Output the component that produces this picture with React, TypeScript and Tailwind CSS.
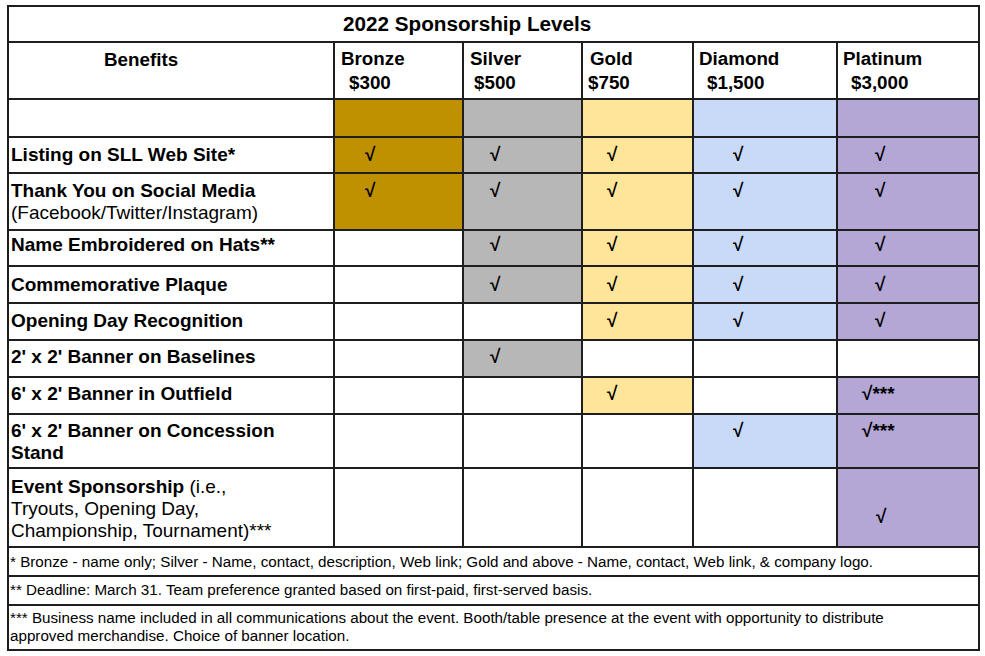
import React from "react";

type Level = "bronze" | "silver" | "gold" | "diamond" | "platinum";

const bg: Record<Level, string> = {
  bronze: "bg-[#bf9000]",
  silver: "bg-[#b7b7b7]",
  gold: "bg-[#ffe599]",
  diamond: "bg-[#c9daf8]",
  platinum: "bg-[#b4a7d6]",
};

const checkPl: Record<Level, string> = {
  bronze: "pl-[30px]",
  silver: "pl-[26px]",
  gold: "pl-[24px]",
  diamond: "pl-[39px]",
  platinum: "pl-[37px]",
};

const levels: Level[] = ["bronze", "silver", "gold", "diamond", "platinum"];

type Cell = null | "check" | "checkStar";

interface Row {
  label: React.ReactNode;
  pt: string;
  cells: Cell[];
}

const rows: Row[] = [
  {
    label: <b>Listing on SLL Web Site*</b>,
    pt: "pt-[6px]",
    cells: ["check", "check", "check", "check", "check"],
  },
  {
    label: (
      <>
        <b>Thank You on Social Media</b>
        <br />
        (Facebook/Twitter/Instagram)
      </>
    ),
    pt: "pt-[6px]",
    cells: ["check", "check", "check", "check", "check"],
  },
  {
    label: <b>Name Embroidered on Hats**</b>,
    pt: "pt-[3px]",
    cells: [null, "check", "check", "check", "check"],
  },
  {
    label: <b>Commemorative Plaque</b>,
    pt: "pt-[7px]",
    cells: [null, "check", "check", "check", "check"],
  },
  {
    label: <b>Opening Day Recognition</b>,
    pt: "pt-[6px]",
    cells: [null, null, "check", "check", "check"],
  },
  {
    label: <b>2' x 2' Banner on Baselines</b>,
    pt: "pt-[5px]",
    cells: [null, "check", null, null, null],
  },
  {
    label: <b>6' x 2' Banner in Outfield</b>,
    pt: "pt-[5px]",
    cells: [null, null, "check", null, "checkStar"],
  },
  {
    label: (
      <b>
        6' x 2' Banner on Concession
        <br />
        Stand
      </b>
    ),
    pt: "pt-[5px]",
    cells: [null, null, null, "check", "checkStar"],
  },
];

function Check({ star }: { star?: boolean }) {
  return <span className="font-bold">√{star ? "***" : ""}</span>;
}

export default function App() {
  return (
    <div className="w-[985px] h-[656px] bg-white font-['Liberation_Sans',Arial,sans-serif] text-black pl-[7px] pt-[5px]">
      <div className="grid w-fit grid-cols-[324px_127px_117px_109px_142px_140px] grid-rows-[34px_55px_36px_34px_55px_34px_35px_35px_35px_35px_52px_77px_27px_27px_43px] gap-[2px] bg-[#1e1e1e] p-[2px]">
        {/* Title */}
        <div className="col-span-6 bg-white pl-[334px] pt-[5px] text-[20.7px] font-bold leading-[24px]">
          2022 Sponsorship Levels
        </div>

        {/* Header */}
        <div className="bg-white pl-[95px] pt-[5px] text-[18.8px] font-bold leading-[24px]">
          Benefits
        </div>
        <div className="bg-white pt-[4px] text-[18.8px] font-bold leading-[24px]">
          <div className="pl-[6px]">Bronze</div>
          <div className="pl-[14px]">$300</div>
        </div>
        <div className="bg-white pt-[4px] text-[18.8px] font-bold leading-[24px]">
          <div className="pl-[6px]">Silver</div>
          <div className="pl-[10px]">$500</div>
        </div>
        <div className="bg-white pt-[4px] text-[18.8px] font-bold leading-[24px]">
          <div className="pl-[7px]">Gold</div>
          <div className="pl-[5px]">$750</div>
        </div>
        <div className="bg-white pt-[4px] text-[18.8px] font-bold leading-[24px]">
          <div className="pl-[5px]">Diamond</div>
          <div className="pl-[13px]">$1,500</div>
        </div>
        <div className="bg-white pt-[4px] text-[18.8px] font-bold leading-[24px]">
          <div className="pl-[5px]">Platinum</div>
          <div className="pl-[13px]">$3,000</div>
        </div>

        {/* Colour row */}
        <div className="bg-white" />
        {levels.map((l) => (
          <div key={l} className={bg[l]} />
        ))}

        {/* Benefit rows */}
        {rows.map((r, i) => (
          <React.Fragment key={i}>
            <div className={`bg-white pl-[2px] text-[19px] leading-[22px] ${r.pt}`}>
              {r.label}
            </div>
            {r.cells.map((c, j) => (
              <div
                key={j}
                className={`${c ? bg[levels[j]] : "bg-white"} ${
                  c === "checkStar" ? "pl-[24px]" : checkPl[levels[j]]
                } text-[19px] leading-[22px] ${r.pt}`}
              >
                {c ? <Check star={c === "checkStar"} /> : null}
              </div>
            ))}
          </React.Fragment>
        ))}

        {/* Event row */}
        <div className="bg-white pl-[2px] pt-[7px] text-[19px] leading-[22px]">
          <b>Event Sponsorship</b> (i.e.,
          <br />
          Tryouts, Opening Day,
          <br />
          Championship, Tournament)***
        </div>
        <div className="bg-white" />
        <div className="bg-white" />
        <div className="bg-white" />
        <div className="bg-white" />
        <div className="bg-[#b4a7d6] pl-[38px] pt-[37px] text-[19px] leading-[22px]">
          <Check />
        </div>

        {/* Footnotes */}
        <div className="col-span-6 bg-white pl-[1px] pt-[5px] text-[15.2px] leading-[18px]">
          * Bronze - name only; Silver - Name, contact, description, Web link; Gold and above - Name, contact, Web link, &amp; company logo.
        </div>
        <div className="col-span-6 bg-white pl-[1px] pt-[4px] text-[15.2px] leading-[18px]">
          ** Deadline: March 31. Team preference granted based on first-paid, first-served basis.
        </div>
        <div className="col-span-6 bg-white pl-[1px] pt-[3px] text-[15.2px] leading-[18px]">
          *** Business name included in all communications about the event. Booth/table presence at the event with opportunity to distribute
          <br />
          approved merchandise. Choice of banner location.
        </div>
      </div>
    </div>
  );
}
